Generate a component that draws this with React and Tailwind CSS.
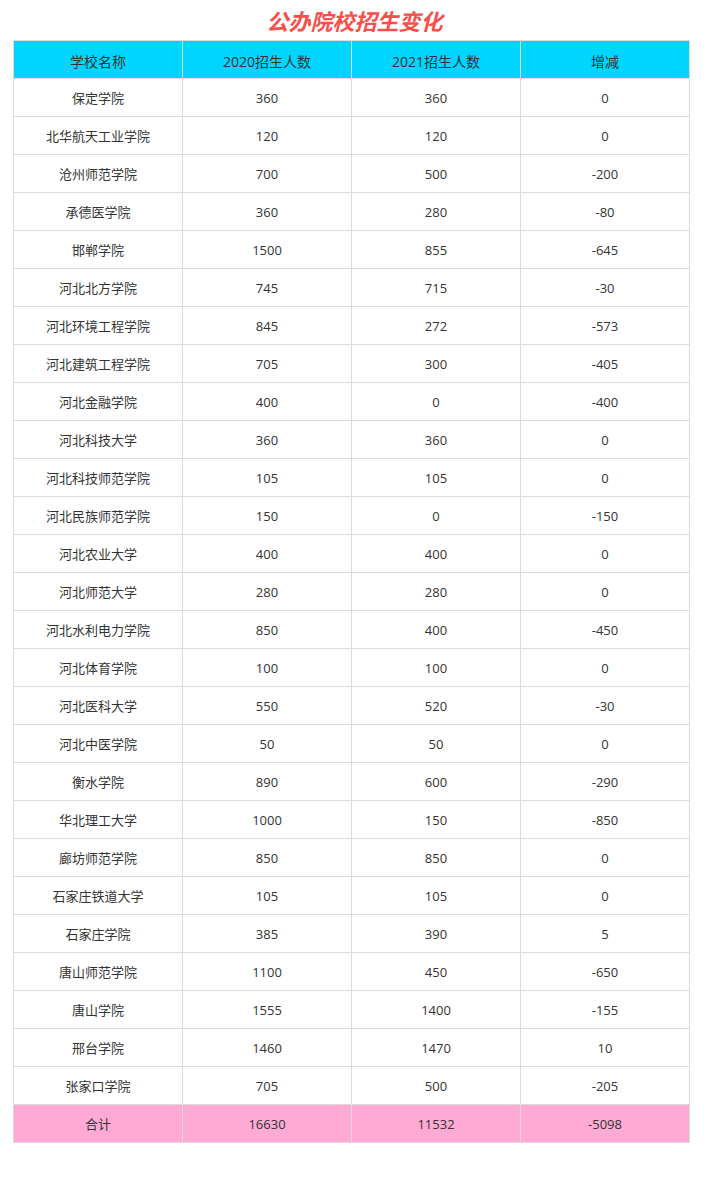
import React from 'react';

const rows = [
    ['保定学院', 360, 360, 0],
    ['北华航天工业学院', 120, 120, 0],
    ['沧州师范学院', 700, 500, -200],
    ['承德医学院', 360, 280, -80],
    ['邯郸学院', 1500, 855, -645],
    ['河北北方学院', 745, 715, -30],
    ['河北环境工程学院', 845, 272, -573],
    ['河北建筑工程学院', 705, 300, -405],
    ['河北金融学院', 400, 0, -400],
    ['河北科技大学', 360, 360, 0],
    ['河北科技师范学院', 105, 105, 0],
    ['河北民族师范学院', 150, 0, -150],
    ['河北农业大学', 400, 400, 0],
    ['河北师范大学', 280, 280, 0],
    ['河北水利电力学院', 850, 400, -450],
    ['河北体育学院', 100, 100, 0],
    ['河北医科大学', 550, 520, -30],
    ['河北中医学院', 50, 50, 0],
    ['衡水学院', 890, 600, -290],
    ['华北理工大学', 1000, 150, -850],
    ['廊坊师范学院', 850, 850, 0],
    ['石家庄铁道大学', 105, 105, 0],
    ['石家庄学院', 385, 390, 5],
    ['唐山师范学院', 1100, 450, -650],
    ['唐山学院', 1555, 1400, -155],
    ['邢台学院', 1460, 1470, 10],
    ['张家口学院', 705, 500, -205],
];

const font = { fontFamily: '"Open Sans", "Noto Sans CJK SC", sans-serif' };

const Cell = ({ children, className = '' }) => (
    <div className={`h-[38px] pt-[3px] border-r border-b border-[#dcdcdc] flex items-center justify-center text-[#333] ${className}`}>
        {children}
    </div>
);

const App = () => {
    return (
        <div className="w-[709px] min-h-[1180px] bg-white" style={font}>
            <h1 className="h-[40px] pt-[3px] flex items-center justify-center text-[22px] font-bold italic text-[#f5504a]">
                公办院校招生变化
            </h1>

            <div className="ml-[13px] w-[677px] border-l border-t border-[#dcdcdc]">
                {/* Header */}
                <div className="grid grid-cols-4 bg-[#00d5ff] text-[14px]">
                    <Cell>学校名称</Cell>
                    <Cell>2020招生人数</Cell>
                    <Cell>2021招生人数</Cell>
                    <Cell>增减</Cell>
                </div>

                {rows.map((r, idx) => (
                    <div key={idx} className="grid grid-cols-4 text-[13px]">
                        <Cell>{r[0]}</Cell>
                        <Cell>{r[1]}</Cell>
                        <Cell>{r[2]}</Cell>
                        <Cell>{r[3]}</Cell>
                    </div>
                ))}

                {/* Total */}
                <div className="grid grid-cols-4 bg-[#feaad4] text-[13px]">
                    <Cell>合计</Cell>
                    <Cell>16630</Cell>
                    <Cell>11532</Cell>
                    <Cell>-5098</Cell>
                </div>
            </div>
        </div>
    );
};

export default App;
